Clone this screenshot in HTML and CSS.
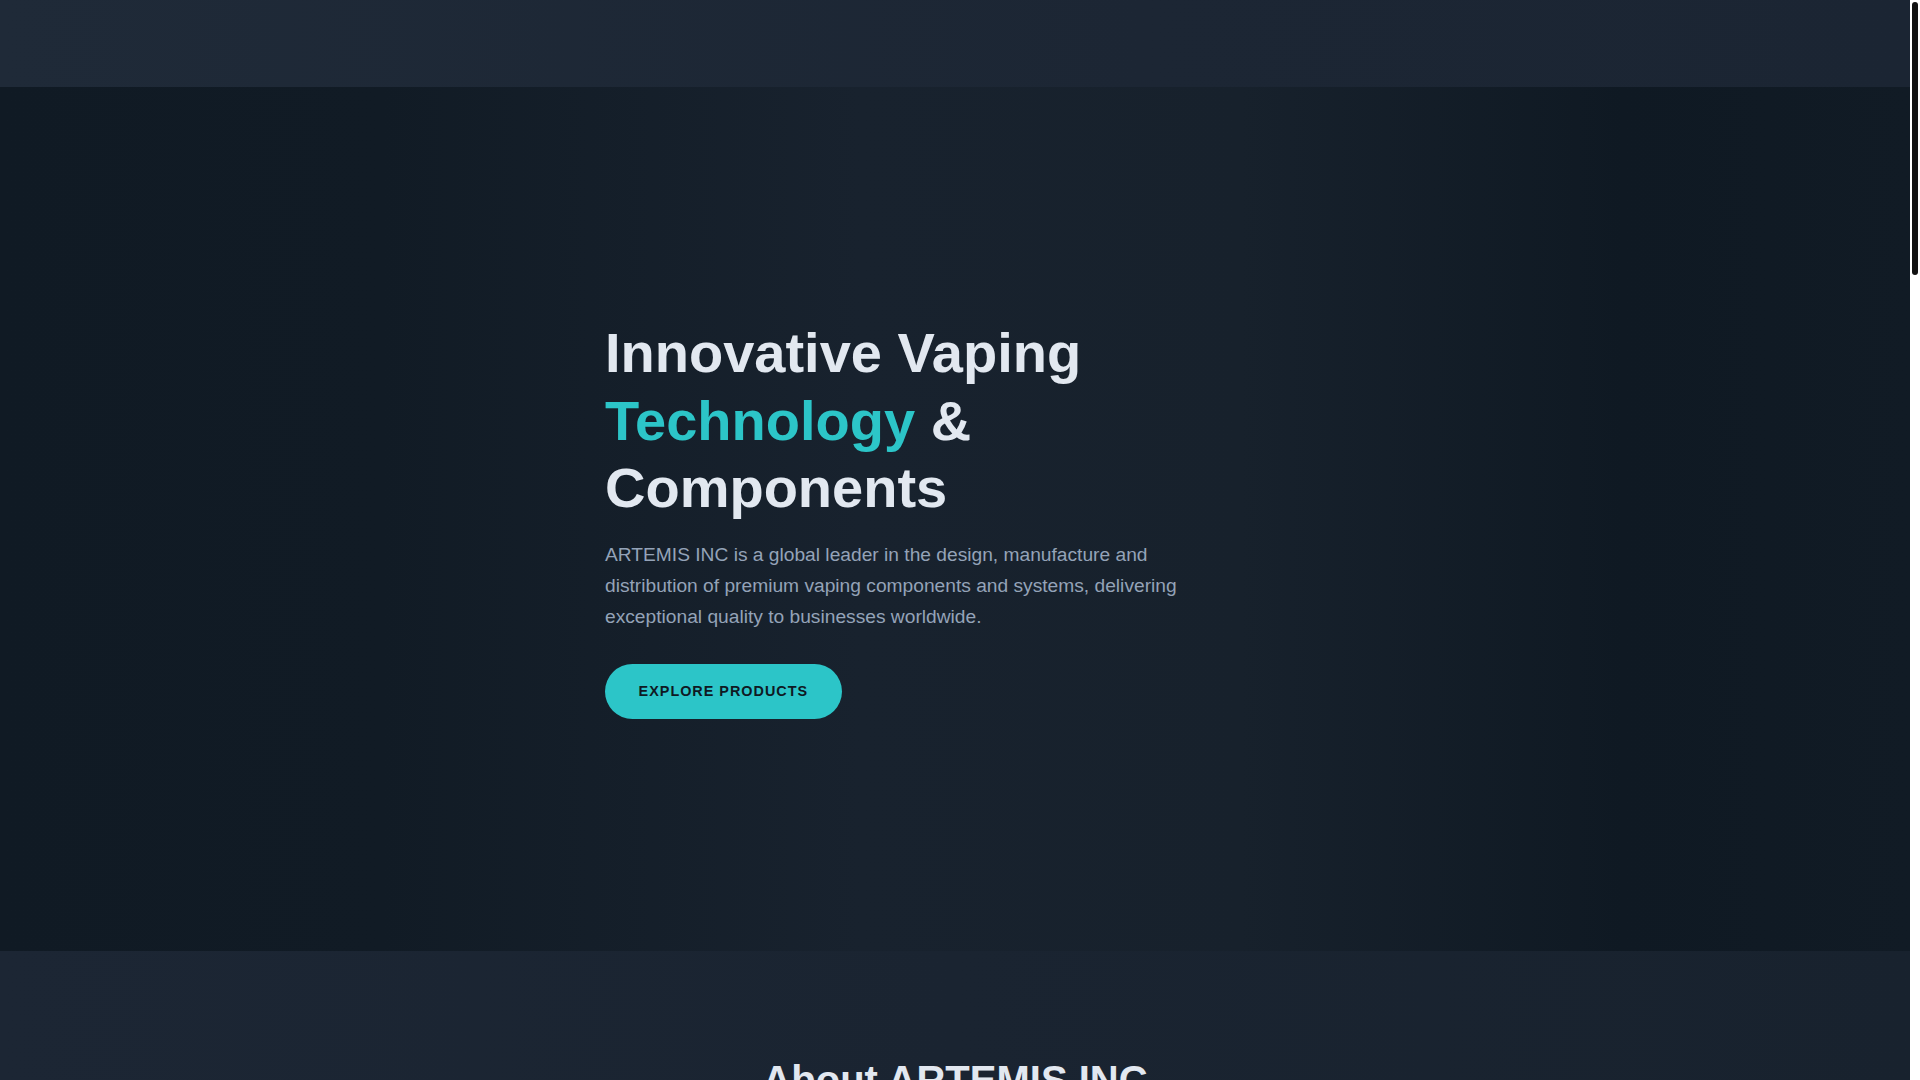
FILE: index.html
```html
<!DOCTYPE html>
<html lang="en">
<head>
<meta charset="utf-8">
<title>ARTEMIS INC - Innovative Vaping Technology &amp; Components</title>
<link rel="stylesheet" href="styles.css">
</head>
<body>
  <header class="site-header"></header>

  <section class="hero">
    <div class="hero-content">
      <h1>Innovative Vaping <span class="accent">Technology</span> &amp; Components</h1>
      <p>ARTEMIS INC is a global leader in the design, manufacture and distribution of premium vaping components and systems, delivering exceptional quality to businesses worldwide.</p>
      <a href="#products" class="btn">Explore Products</a>
    </div>
  </section>

  <section class="about" id="about">
    <h2>About ARTEMIS INC</h2>
  </section>

  <!-- slim page scroll rail -->
  <div class="scroll-rail" aria-hidden="true"><div class="scroll-thumb"></div></div>
</body>
</html>
```

FILE: styles.css
```css
body {
  margin: 0;
  padding-right: 10px;
  background: #0f1923;
  color: #e2e8f0;
  font-family: "Liberation Sans", Arial, sans-serif;
}

.scroll-rail {
  position: fixed;
  top: 0;
  right: 0;
  width: 10px;
  height: 100vh;
  background: #fff;
}

.scroll-thumb {
  margin: 2px 2px 0;
  height: 273px;
  background: #111;
  border-radius: 3px;
}

.site-header {
  height: 87px;
  background: linear-gradient(90deg, #1f2a38 0%, #1c2634 60%, #1b2533 100%);
}

.hero {
  height: 80vh;
  display: flex;
  align-items: center;
  justify-content: center;
  background: linear-gradient(90deg, #101a24 0%, #111b25 20%, #18222e 45%, #17212c 65%, #0f1923 85%, #111b25 100%);
}

.hero-content {
  width: 700px;
}

.hero h1 {
  font-size: 3.5rem;
  line-height: 1.2;
  font-weight: 700;
  margin: 0 0 1.2rem;
  color: #e2e8f0;
}

.accent { color: #2cc5c8; }

.hero p {
  max-width: 600px;
  font-size: 1.2rem;
  line-height: 1.6;
  color: #94a3b8;
  margin: 0 0 2rem;
}

.btn {
  display: inline-block;
  padding: 1.2rem 2.1rem;
  background: #2cc5c8;
  color: #0f1923;
  border-radius: 50px;
  font-size: 0.9rem;
  font-weight: 700;
  letter-spacing: 1px;
  text-transform: uppercase;
  text-decoration: none;
}

.about {
  min-height: 3260px;
  box-sizing: border-box;
  padding: 105px 2rem 0;
  background: linear-gradient(90deg, #1c2634 0%, #1a2431 50%, #18222e 100%);
  text-align: center;
}

.about h2 {
  font-size: 2.5rem;
  line-height: 1.2;
  margin: 0;
  color: #e2e8f0;
}
```
